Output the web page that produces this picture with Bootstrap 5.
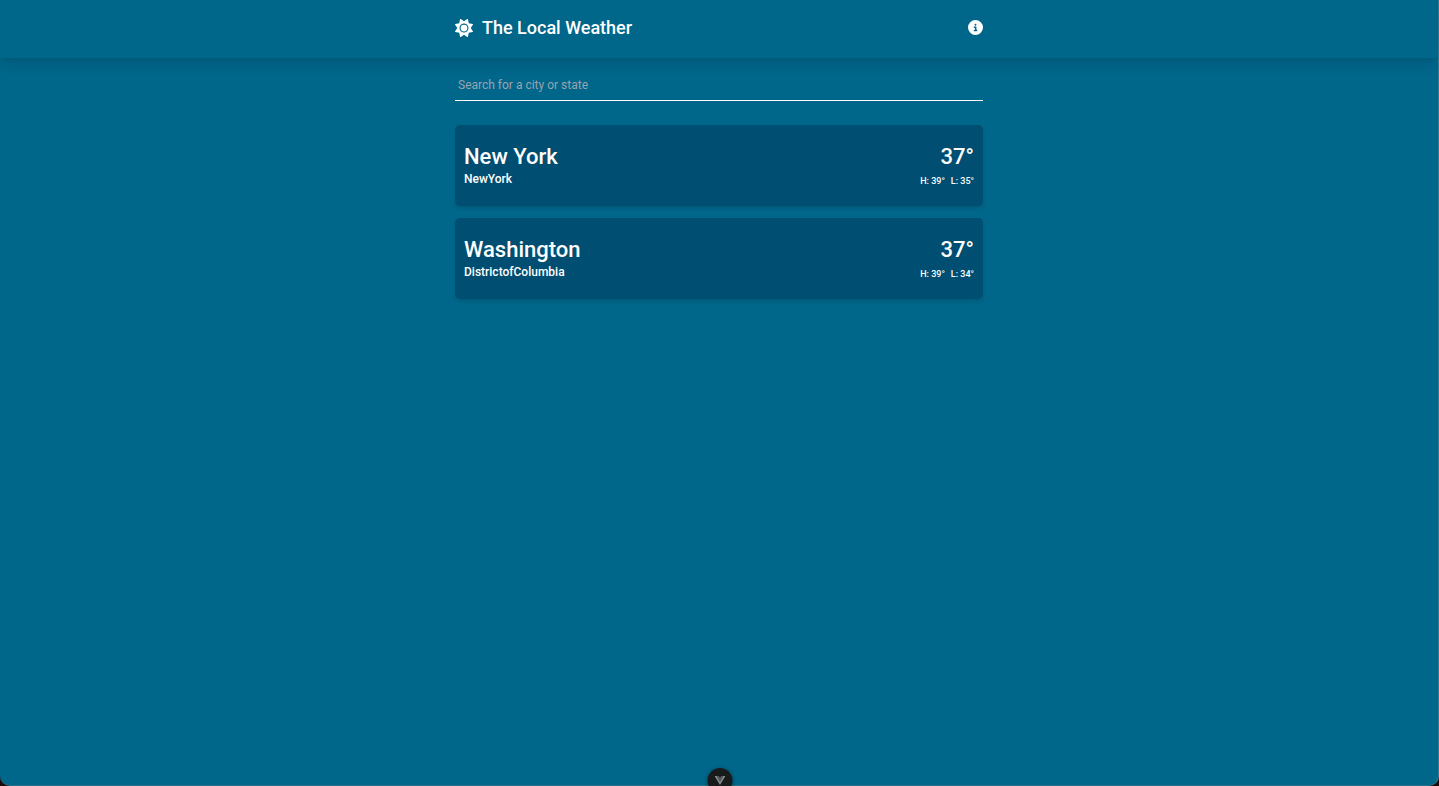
<!DOCTYPE html>
<html lang="en">
<head>
<meta charset="utf-8">
<meta name="viewport" content="width=device-width, initial-scale=1">
<title>The Local Weather</title>
<link href="https://cdn.jsdelivr.net/npm/bootstrap@5.3.0/dist/css/bootstrap.min.css" rel="stylesheet">
<style>
  html { background: #1c0a0c; }
  body { font-family: Roboto, sans-serif; font-size: 12px; line-height: 18px; font-weight: 500; color: #fff; background: transparent; }
  .app-shell { background: #00668a; border-radius: 0 0 10px 10px; border-right: 1px solid #2b7c99; border-bottom: 1px solid #2b6f88; }
  .app-width { max-width: 552px; padding: 0 12px; }
  .app-header { box-shadow: 0 8px 12px -2px rgba(0, 0, 0, .1), 0 3px 5px -3px rgba(0, 0, 0, .1); padding: 14px 0 17px; }
  .brand-link { font-size: 18px; line-height: 27px; gap: 9px; }
  .info-btn { line-height: 0; }
  .search-box { height: 32px; padding: 0 3px; font-size: 12px; font-weight: 400; color: #fff; border-bottom: 1px solid #fff !important; }
  .search-box::placeholder { color: #9ca3af; opacity: 1; }
  .search-box:focus { outline: 0; }
  .search-area { padding-top: 11px; padding-bottom: 24px; }
  .city-list { gap: 12px; }
  .city-card { background: #004e71; border-radius: 5px; padding: 18px 9px; box-shadow: 0 3px 5px -1px rgba(0, 0, 0, .1), 0 2px 3px -2px rgba(0, 0, 0, .1); }
  .city-name, .city-temp { font-size: 22px; line-height: 27px; font-weight: 500; }
  .city-range { font-size: 9px; line-height: 13px; gap: 6px; padding-top: 5px; }
  .devtools-btn { width: 25px; height: 25px; bottom: -7px; background: #171b1c; box-shadow: 0 1px 4px rgba(0, 0, 0, .4); }
</style>
</head>
<body>
<div class="app-shell min-vh-100">
  <header class="app-header">
    <nav class="app-width mx-auto d-flex align-items-center justify-content-between" aria-label="Main">
      <a class="brand-link d-flex align-items-center text-white text-decoration-none" href="#">
        <svg width="18" height="18" viewBox="0 0 512 512" fill="currentColor" aria-hidden="true"><path d="M361.5 1.2c5 2.1 8.6 6.6 9.6 11.9L391 121l107.9 19.8c5.3 1 9.8 4.6 11.9 9.6s1.5 10.7-1.6 15.2L446.9 256l62.3 90.3c3.1 4.5 3.7 10.2 1.6 15.2s-6.6 8.6-11.9 9.6L391 391 371.1 498.9c-1 5.3-4.6 9.8-9.6 11.9s-10.7 1.5-15.2-1.6L256 446.9l-90.3 62.3c-4.5 3.1-10.2 3.7-15.2 1.6s-8.6-6.6-9.6-11.9L121 391 13.1 371.1c-5.3-1-9.8-4.6-11.9-9.6s-1.5-10.7 1.6-15.2L65.1 256 2.8 165.7c-3.1-4.5-3.7-10.2-1.6-15.2s6.6-8.6 11.9-9.6L121 121 140.9 13.1c1-5.3 4.6-9.8 9.6-11.9s10.7-1.5 15.2 1.6L256 65.1 346.3 2.8c4.5-3.1 10.2-3.7 15.2-1.6zM160 256a96 96 0 1 1 192 0 96 96 0 1 1 -192 0zm224 0a128 128 0 1 0 -256 0 128 128 0 1 0 256 0z"/></svg>
        <span>The Local Weather</span>
      </a>
      <button class="info-btn border-0 bg-transparent text-white p-0" type="button" aria-label="About">
        <svg width="15" height="15" viewBox="0 0 512 512" fill="currentColor" aria-hidden="true"><path d="M256 512A256 256 0 1 0 256 0a256 256 0 1 0 0 512zM216 336h24V272H216c-13.3 0-24-10.7-24-24s10.7-24 24-24h48c13.3 0 24 10.7 24 24v88h8c13.3 0 24 10.7 24 24s-10.7 24-24 24H216c-13.3 0-24-10.7-24-24s10.7-24 24-24zm40-208a32 32 0 1 1 0 64 32 32 0 1 1 0-64z"/></svg>
      </button>
    </nav>
  </header>

  <main class="app-width mx-auto">
    <div class="search-area">
      <input class="search-box d-block w-100 border-0 bg-transparent" type="text" aria-label="Search for a city or state" placeholder="Search for a city or state">
    </div>

    <div class="city-list d-flex flex-column">
      <article class="city-card d-flex justify-content-between">
        <div>
          <h2 class="city-name mb-0">New York</h2>
          <div>NewYork</div>
        </div>
        <div class="text-end">
          <div class="city-temp">37°</div>
          <div class="city-range d-flex justify-content-end"><span>H: 39°</span><span>L: 35°</span></div>
        </div>
      </article>
      <article class="city-card d-flex justify-content-between">
        <div>
          <h2 class="city-name mb-0">Washington</h2>
          <div>DistrictofColumbia</div>
        </div>
        <div class="text-end">
          <div class="city-temp">37°</div>
          <div class="city-range d-flex justify-content-end"><span>H: 39°</span><span>L: 34°</span></div>
        </div>
      </article>
    </div>
  </main>
</div>

<button class="devtools-btn position-fixed start-50 translate-middle-x border-0 rounded-circle d-flex justify-content-center align-items-center p-0" type="button" aria-label="Toggle developer tools">
  <svg width="11" height="9" viewBox="0 0 12 10" aria-hidden="true"><path d="M0 0h2.500L6 6 9.500 0H12L6 10z" fill="#85898a"/><path d="M2.500 0h2.200L6 2.300 7.300 0h2.200L6 6z" fill="#565b5d"/></svg>
</button>
<script src="https://cdn.jsdelivr.net/npm/bootstrap@5.3.0/dist/js/bootstrap.bundle.min.js"></script>
</body>
</html>
